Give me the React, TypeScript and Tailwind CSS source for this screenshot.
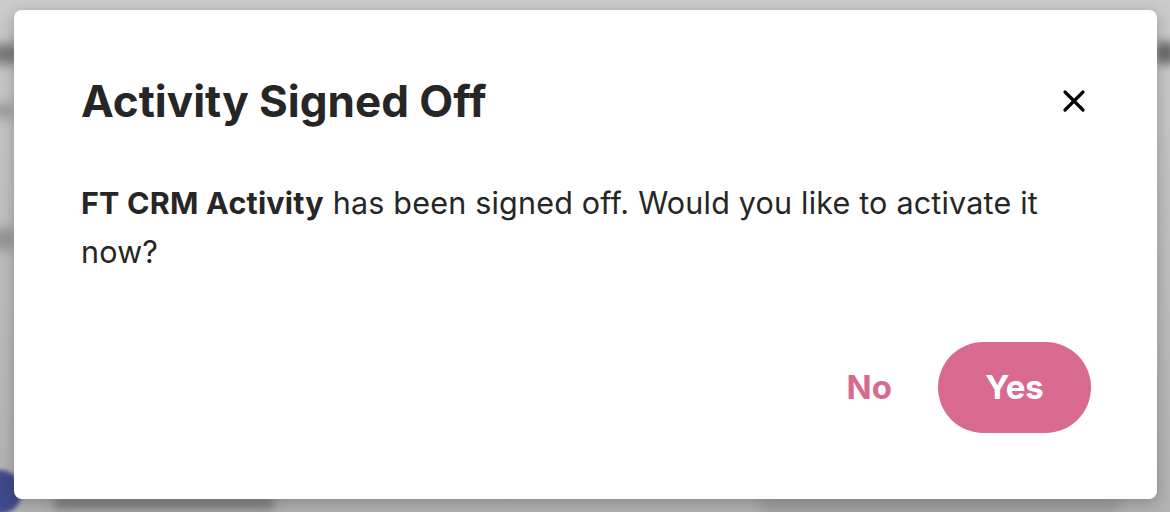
import React from 'react';

const font = { fontFamily: 'Inter, "Noto Sans", sans-serif' };

const CloseIcon: React.FC = () => (
  <svg width="24" height="24" viewBox="0 0 24 24" fill="none" stroke="#000" strokeWidth="3.2" strokeLinecap="round">
    <path d="M3 3 L21 21 M21 3 L3 21" />
  </svg>
);

const App: React.FC = () => {
  return (
    <div className="relative h-[512px] w-[1170px] overflow-hidden bg-gradient-to-b from-[#cbcbcb] to-[#b2b2b2]" style={font}>
      {/* blurred page behind the overlay */}
      <div className="absolute left-[-10px] top-[44px] h-[20px] w-[30px] rounded bg-[#555] blur-[6px] opacity-70" />
      <div className="absolute left-[-8px] top-[104px] h-[14px] w-[22px] rounded bg-[#777] blur-[6px] opacity-60" />
      <div className="absolute left-[-8px] top-[228px] h-[22px] w-[22px] rounded bg-[#777] blur-[6px] opacity-60" />
      <div className="absolute left-[-22px] top-[470px] h-[44px] w-[44px] rounded-full bg-[#3f4a8a] blur-[2px]" />
      <div className="absolute left-[54px] top-[496px] h-[14px] w-[220px] rounded bg-[#666] blur-[5px] opacity-60" />
      <div className="absolute left-[760px] top-[500px] h-[12px] w-[360px] rounded bg-[#888] blur-[6px] opacity-50" />
      <div className="absolute right-[-6px] top-[42px] h-[22px] w-[20px] rounded bg-[#444] blur-[5px] opacity-70" />

      <div className="relative ml-[14px] mt-[10px] flex h-[489px] w-[1143px] flex-col rounded-lg bg-white pl-[67px] pr-[66px] pt-[67px] shadow-[0_4px_16px_rgba(0,0,0,0.25)]">
        <div className="flex h-[48px] items-center justify-between">
          <h2 className="text-[44px] font-bold leading-[48px] text-[#262626]">Activity Signed Off</h2>
          <button className="mr-[5px] flex h-[24px] w-[24px] items-center justify-center">
            <CloseIcon />
          </button>
        </div>
        <p className="mt-[53px] text-[30.5px] leading-[49px] tracking-[0.2px] text-[#262626]">
          <span className="font-bold">FT CRM Activity</span> has been signed off. Would you like to activate it now?
        </p>
        <div className="mt-auto mb-[66px] flex items-center justify-end gap-[46px]">
          <button className="text-[33px] font-bold text-[#d96a8f]">No</button>
          <button className="h-[91px] w-[153px] rounded-full bg-[#d96a8f] text-[33px] font-bold text-white">Yes</button>
        </div>
      </div>
    </div>
  );
};

export default App;
